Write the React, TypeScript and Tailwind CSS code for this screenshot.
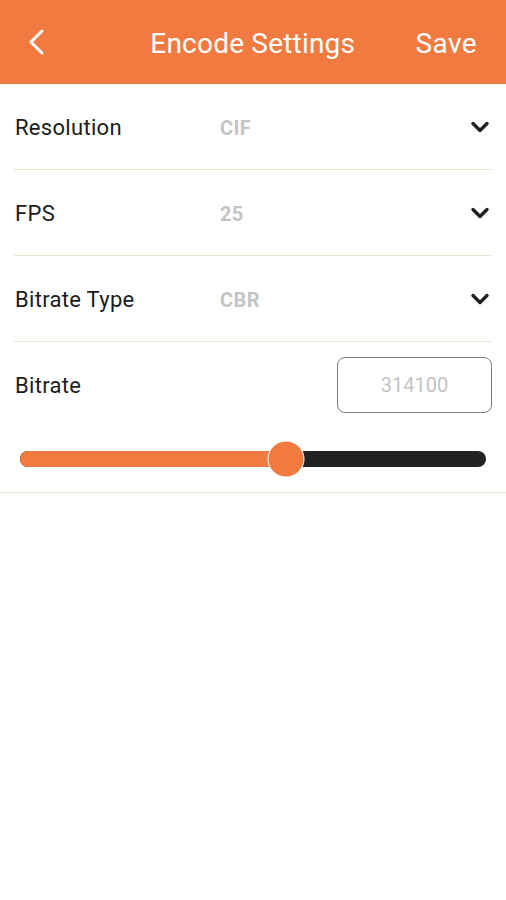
import { ChevronDown } from 'lucide-react';

const rows = [
  { label: 'Resolution', value: 'CIF' },
  { label: 'FPS', value: '25' },
  { label: 'Bitrate Type', value: 'CBR' },
];

export default function App() {
  const percent = 57;

  return (
    <div className="w-[506px] h-[900px] bg-white font-['Roboto',sans-serif]">
      {/* Header */}
      <div className="h-[84px] bg-[#f07a40] flex items-center pl-[26px] pr-[29px] text-white">
        <svg width="20" height="28" viewBox="0 0 20 28" fill="none" className="shrink-0">
          <path d="M16 3 L5 14 L16 25" stroke="white" strokeWidth="3" strokeLinecap="round" strokeLinejoin="round" />
        </svg>
        <div className="flex-1 text-center text-[28px] tracking-[0.2px] pl-[44px] mt-[3px]">Encode Settings</div>
        <div className="text-[28px] tracking-[0.4px] mt-[3px]">Save</div>
      </div>

      {/* Select rows */}
      <div className="px-[14px]">
        {rows.map((row) => (
          <div key={row.label} className="h-[86px] flex items-center border-b border-[#efe3d3]">
            <div className="w-[206px] text-[22px] tracking-[0.3px] text-[#1c1c1c] pl-px mt-[2px]">{row.label}</div>
            <div className="flex-1 text-[20px] tracking-[0.4px] font-bold text-[#c4c4c4] mt-[2px]">{row.value}</div>
            <ChevronDown className="w-[28px] h-[28px] text-[#222] -mr-[2px]" strokeWidth={3} />
          </div>
        ))}
        <div className="h-[86px] flex items-center justify-between">
          <div className="text-[22px] tracking-[0.3px] text-[#1c1c1c] pl-px">Bitrate</div>
          <div className="w-[155px] h-[56px] rounded-[8px] border border-[#7a7a7a] flex items-center justify-center text-[20px] text-[#c4c4c4]">
            314100
          </div>
        </div>
      </div>

      {/* Slider */}
      <div className="h-[65px] border-b border-[#efe3d3] px-[20px] pt-[23px]">
        <div className="relative h-[16px] rounded-full bg-[#222]">
          <div className="h-full rounded-full bg-[#f07a40]" style={{ width: `${percent}%` }} />
          <div
            className="absolute top-1/2 w-[37px] h-[37px] -translate-x-1/2 -translate-y-1/2 rounded-full bg-[#f07a40] border border-white"
            style={{ left: `${percent}%` }}
          />
        </div>
      </div>
    </div>
  );
}
